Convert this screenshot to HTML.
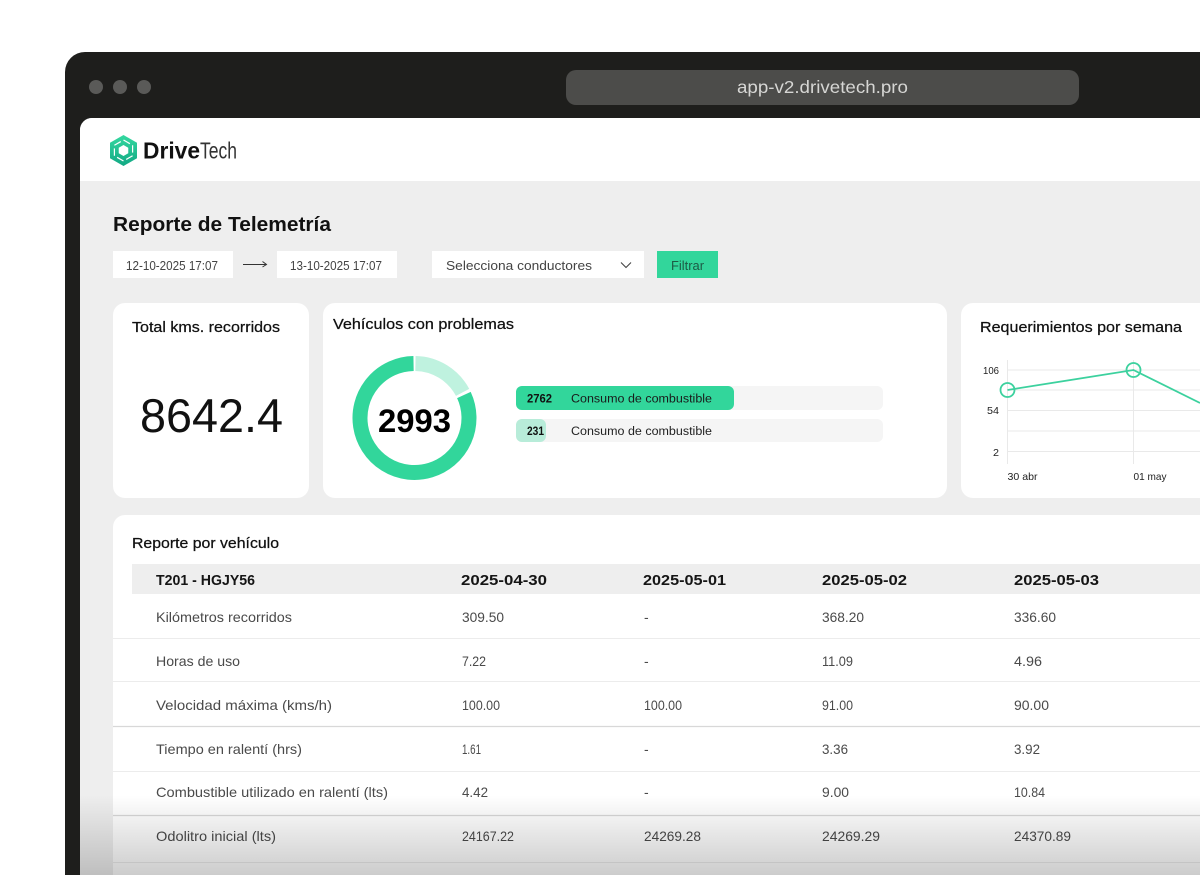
<!DOCTYPE html>
<html lang="es"><head><meta charset="utf-8"><title>DriveTech</title>
<style>
html,body{margin:0;padding:0;background:#fff;width:1200px;height:875px;overflow:hidden}
svg{display:block}
text{font-family:"Liberation Sans",sans-serif;fill:#222}
.b{font-weight:700;fill:#111}
.m{fill:#111;stroke:#111;stroke-width:.25}
.r{font-size:14px;fill:#4a4a4a}
.h{font-size:14.5px;font-weight:700;fill:#151515}
</style></head><body>
<svg xmlns="http://www.w3.org/2000/svg" width="1200" height="875" viewBox="0 0 1200 875">
<defs>
<linearGradient id="fade" x1="0" y1="0" x2="0" y2="1"><stop offset="0" stop-color="#000" stop-opacity="0"/><stop offset="1" stop-color="#000" stop-opacity=".2"/></linearGradient>
<linearGradient id="lg" x1="0" y1="0" x2="0" y2="1"><stop offset="0" stop-color="#35d9a0"/><stop offset="1" stop-color="#12a884"/></linearGradient>
</defs>
<rect width="1200" height="875" fill="#fff"/>
<path d="M65 875V72a20 20 0 0 1 20-20H1200V875Z" fill="#1e1e1c"/>
<circle cx="96" cy="87" r="7" fill="#5a5a58"/><circle cx="120" cy="87" r="7" fill="#5a5a58"/><circle cx="144" cy="87" r="7" fill="#5a5a58"/>
<rect x="566" y="70" width="513" height="35" rx="10" fill="#4c4c4a"/>
<text x="737" y="93" font-size="17.5" textLength="171" lengthAdjust="spacingAndGlyphs" style="fill:#d6d6d4">app-v2.drivetech.pro</text>

<path d="M80 875V130a12 12 0 0 1 12-12H1200V875Z" fill="#eeeeee"/>
<path d="M80 181V130a12 12 0 0 1 12-12H1200V181Z" fill="#fff"/>

<!-- logo -->
<path fill="url(#lg)" fill-rule="evenodd" d="M123.500 135L137 142.750V158.250L123.500 166L110 158.250V142.750ZM123.500 145L118.740 147.750V153.250L123.500 156L128.260 153.250V147.750Z"/>
<g fill="none" stroke="#fff" stroke-width="1.200">
<path d="M123.500 140L129.900 143.700"/>
<path d="M132.600 145.250V152.600"/>
<path d="M132.600 155.750L126.200 159.450"/>
<path d="M123.500 161L117.100 157.300"/>
<path d="M114.400 155.750V148.400"/>
<path d="M114.400 145.250L120.800 141.550"/>
</g>
<text x="143" y="158.500" font-size="23" class="b" textLength="57" lengthAdjust="spacingAndGlyphs">Drive</text>
<text x="200" y="158.500" font-size="23" textLength="37" lengthAdjust="spacingAndGlyphs" style="fill:#333">Tech</text>

<text x="113" y="231" font-size="20" class="b" textLength="218" lengthAdjust="spacingAndGlyphs">Reporte de Telemetría</text>

<!-- filters -->
<rect x="113" y="251" width="120" height="27" fill="#fff"/>
<text x="126" y="270" font-size="13" textLength="92" lengthAdjust="spacingAndGlyphs" style="fill:#444">12-10-2025 17:07</text>
<path d="M243 264.500H266M262.500 261.500L266.500 264.500L262.500 267" fill="none" stroke="#333" stroke-width="1"/>
<rect x="277" y="251" width="120" height="27" fill="#fff"/>
<text x="290" y="270" font-size="13" textLength="92" lengthAdjust="spacingAndGlyphs" style="fill:#444">13-10-2025 17:07</text>
<rect x="432" y="251" width="212" height="27" fill="#fff"/>
<text x="446" y="270" font-size="13" textLength="146" lengthAdjust="spacingAndGlyphs" style="fill:#444">Selecciona conductores</text>
<path d="M621 262.500L626 267.500L631 262.500" fill="none" stroke="#444" stroke-width="1.100"/>
<rect x="657" y="251" width="61" height="27" fill="#32d69b"/>
<text x="671" y="270" font-size="13" textLength="33" lengthAdjust="spacingAndGlyphs" style="fill:#1d5a45">Filtrar</text>

<!-- card 1 -->
<rect x="113" y="303" width="196" height="195" rx="12" fill="#fff"/>
<text x="132" y="332" font-size="15" class="m" textLength="148" lengthAdjust="spacingAndGlyphs">Total kms. recorridos</text>
<text x="140" y="432" font-size="47" textLength="143" lengthAdjust="spacingAndGlyphs" style="fill:#111">8642.4</text>

<!-- card 2 -->
<rect x="323" y="303" width="624" height="195" rx="12" fill="#fff"/>
<text x="333" y="329" font-size="15" class="m" textLength="181" lengthAdjust="spacingAndGlyphs">Vehículos con problemas</text>
<path d="M415.450 363.500A54.500 54.500 0 0 1 462.600 392.400" fill="none" stroke="#bff2df" stroke-width="15"/>
<path d="M463.900 395A54.500 54.500 0 1 1 413.550 363.500" fill="none" stroke="#32d69b" stroke-width="15"/>
<text x="378" y="432" font-size="32" class="b" textLength="73" lengthAdjust="spacingAndGlyphs" style="fill:#000">2993</text>

<rect x="516" y="386" width="367" height="24" rx="6" fill="#f5f5f5"/>
<rect x="516" y="386" width="218" height="24" rx="6" fill="#32d69b"/>
<text x="527" y="402.500" font-size="11.500" class="b" textLength="25" lengthAdjust="spacingAndGlyphs">2762</text>
<text x="571" y="402.500" font-size="11.500" textLength="141" lengthAdjust="spacingAndGlyphs" style="fill:#1a1a1a">Consumo de combustible</text>
<rect x="516" y="419" width="367" height="23" rx="6" fill="#f5f5f5"/>
<rect x="516" y="419" width="30" height="23" rx="6" fill="#b8ecd9"/>
<text x="527" y="435" font-size="11.500" class="b" textLength="17" lengthAdjust="spacingAndGlyphs">231</text>
<text x="571" y="435" font-size="11.500" textLength="141" lengthAdjust="spacingAndGlyphs" style="fill:#222">Consumo de combustible</text>

<!-- card 3 -->
<path d="M1200 303H973a12 12 0 0 0-12 12V486a12 12 0 0 0 12 12H1200Z" fill="#fff"/>
<text x="980" y="332" font-size="15" class="m" textLength="202" lengthAdjust="spacingAndGlyphs">Requerimientos por semana</text>
<g stroke="#e9e9e9" stroke-width="1">
<path d="M1007 370H1200M1007 390H1200M1007 410.500H1200M1007 431H1200M1007 451.500H1200M1007.500 360V464M1133.500 360V464"/>
</g>
<path d="M1007.500 390L1133.500 370L1200 403" fill="none" stroke="#3cd19e" stroke-width="1.800"/>
<circle cx="1007.500" cy="390" r="7" fill="none" stroke="#3cd19e" stroke-width="1.800"/>
<circle cx="1133.500" cy="370" r="7" fill="none" stroke="#3cd19e" stroke-width="1.800"/>
<text x="983" y="374" font-size="10.500" textLength="16" lengthAdjust="spacingAndGlyphs">106</text>
<text x="987" y="414" font-size="10.500" textLength="12" lengthAdjust="spacingAndGlyphs">54</text>
<text x="993" y="456" font-size="10.500" textLength="6" lengthAdjust="spacingAndGlyphs">2</text>
<text x="1007.500" y="480" font-size="10.500" textLength="30" lengthAdjust="spacingAndGlyphs">30 abr</text>
<text x="1133.500" y="480" font-size="10.500" textLength="33" lengthAdjust="spacingAndGlyphs">01 may</text>

<!-- table -->
<path d="M1200 515H125a12 12 0 0 0-12 12V875H1200Z" fill="#fff"/>
<text x="132" y="548" font-size="14.500" class="m" textLength="147" lengthAdjust="spacingAndGlyphs">Reporte por vehículo</text>
<rect x="132" y="564" width="1068" height="30" fill="#eeeeee"/>
<text class="h" x="156" y="585" textLength="99" lengthAdjust="spacingAndGlyphs">T201 - HGJY56</text>
<text class="h" x="461" y="585" textLength="86" lengthAdjust="spacingAndGlyphs">2025-04-30</text>
<text class="h" x="643" y="585" textLength="83" lengthAdjust="spacingAndGlyphs">2025-05-01</text>
<text class="h" x="822" y="585" textLength="85" lengthAdjust="spacingAndGlyphs">2025-05-02</text>
<text class="h" x="1014" y="585" textLength="85" lengthAdjust="spacingAndGlyphs">2025-05-03</text>

<g fill="none">
<path d="M113 638.500H1200M113 681.500H1200M113 771.500H1200M113 862.500H1200" stroke="#ececec"/>
<path d="M113 726.500H1200M113 815.500H1200" stroke="#d8d8d8" stroke-width="1.200"/>
</g>

<text class="r" x="156" y="622" textLength="136" lengthAdjust="spacingAndGlyphs">Kilómetros recorridos</text>
<text class="r" x="462" y="622" textLength="42" lengthAdjust="spacingAndGlyphs">309.50</text>
<text class="r" x="644" y="622">-</text>
<text class="r" x="822" y="622" textLength="42" lengthAdjust="spacingAndGlyphs">368.20</text>
<text class="r" x="1014" y="622" textLength="42" lengthAdjust="spacingAndGlyphs">336.60</text>

<text class="r" x="156" y="666" textLength="84" lengthAdjust="spacingAndGlyphs">Horas de uso</text>
<text class="r" x="462" y="666" textLength="24" lengthAdjust="spacingAndGlyphs">7.22</text>
<text class="r" x="644" y="666">-</text>
<text class="r" x="822" y="666" textLength="31" lengthAdjust="spacingAndGlyphs">11.09</text>
<text class="r" x="1014" y="666" textLength="28" lengthAdjust="spacingAndGlyphs">4.96</text>

<text class="r" x="156" y="710" textLength="176" lengthAdjust="spacingAndGlyphs">Velocidad máxima (kms/h)</text>
<text class="r" x="462" y="710" textLength="38" lengthAdjust="spacingAndGlyphs">100.00</text>
<text class="r" x="644" y="710" textLength="38" lengthAdjust="spacingAndGlyphs">100.00</text>
<text class="r" x="822" y="710" textLength="31" lengthAdjust="spacingAndGlyphs">91.00</text>
<text class="r" x="1014" y="710" textLength="35" lengthAdjust="spacingAndGlyphs">90.00</text>

<text class="r" x="156" y="754" textLength="146" lengthAdjust="spacingAndGlyphs">Tiempo en ralentí (hrs)</text>
<text class="r" x="462" y="754" textLength="19" lengthAdjust="spacingAndGlyphs">1.61</text>
<text class="r" x="644" y="754">-</text>
<text class="r" x="822" y="754" textLength="26" lengthAdjust="spacingAndGlyphs">3.36</text>
<text class="r" x="1014" y="754" textLength="26" lengthAdjust="spacingAndGlyphs">3.92</text>

<text class="r" x="156" y="797" textLength="232" lengthAdjust="spacingAndGlyphs">Combustible utilizado en ralentí (lts)</text>
<text class="r" x="462" y="797" textLength="26" lengthAdjust="spacingAndGlyphs">4.42</text>
<text class="r" x="644" y="797">-</text>
<text class="r" x="822" y="797" textLength="27" lengthAdjust="spacingAndGlyphs">9.00</text>
<text class="r" x="1014" y="797" textLength="31" lengthAdjust="spacingAndGlyphs">10.84</text>

<text class="r" x="156" y="841" textLength="120" lengthAdjust="spacingAndGlyphs">Odolitro inicial (lts)</text>
<text class="r" x="462" y="841" textLength="52" lengthAdjust="spacingAndGlyphs">24167.22</text>
<text class="r" x="644" y="841" textLength="57" lengthAdjust="spacingAndGlyphs">24269.28</text>
<text class="r" x="822" y="841" textLength="58" lengthAdjust="spacingAndGlyphs">24269.29</text>
<text class="r" x="1014" y="841" textLength="57" lengthAdjust="spacingAndGlyphs">24370.89</text>

<rect x="80" y="795" width="1120" height="80" fill="url(#fade)"/>
</svg>
</body></html>
